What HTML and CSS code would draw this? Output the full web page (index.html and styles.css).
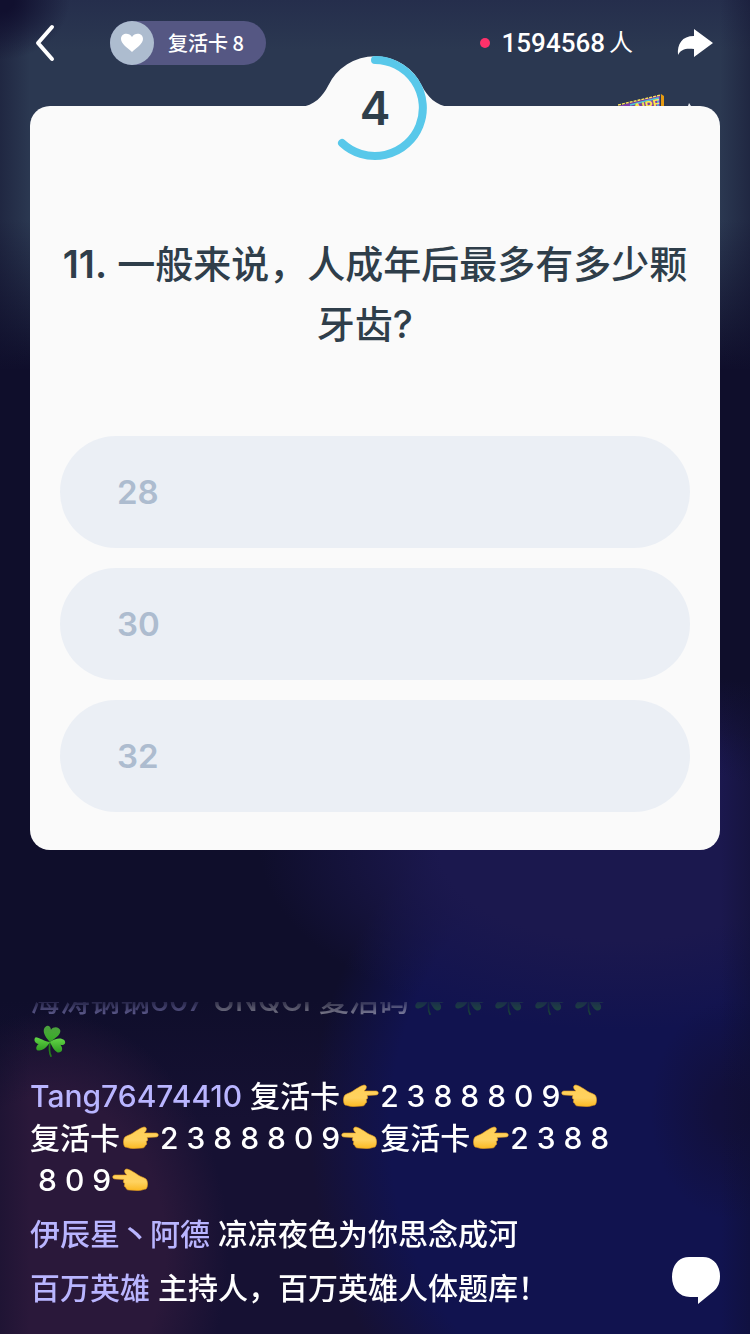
FILE: index.html
```html
<!DOCTYPE html>
<html lang="zh-CN">
<head>
<meta charset="utf-8">
<meta name="viewport" content="width=device-width, initial-scale=1">
<title>百万英雄</title>
<link rel="stylesheet" href="styles.css">
</head>
<body>
<svg class="sprite" aria-hidden="true">
  <defs>
    <linearGradient id="skin" x1="0" y1="0" x2="0" y2="1">
      <stop offset="0" stop-color="#ffd057"/><stop offset="0.6" stop-color="#ffd25f"/><stop offset="1" stop-color="#fbb923"/>
    </linearGradient>
    <linearGradient id="leaf" x1="0" y1="0" x2="0" y2="1">
      <stop offset="0" stop-color="#62d546"/><stop offset="1" stop-color="#2f9c22"/>
    </linearGradient>
    <symbol id="hand" viewBox="0 0 40 28">
      <path fill="url(#skin)" stroke="#e9a01d" stroke-width="0.6" d="M5 13C8 11 10 11 13 9C16 7 20 4 24 3C27 3 27 6 25 8L24 9L36 9C39 9 39 13 36 13L27 13.5C28 15 28 17 26 17.500C27 19 27 21 25 21.500C25 23 24 24 22 24L14 24.500C10 25 7 23 5 23C3 21 3 15 5 13Z"/>
    </symbol>
    <symbol id="clover" viewBox="0 0 40 36">
      <path fill="none" stroke="#237c1b" stroke-width="1.8" stroke-linecap="round" d="M20 18C19 24 19 29 21 33"/>
      <g fill="url(#leaf)">
        <path d="M20 18C15 13 11 6 15 2C18 -1 21 2 21 5C24 1 30 2 31 6C31 11 25 14 20 18Z"/>
        <path d="M20 18C15 18 8 13 5 13C2 15 4 20 8 20C4 23 5 28 9 27C15 26 18 21 20 18Z"/>
        <path d="M20 18C25 14 32 13 35 16C38 20 34 22 31 21C35 26 32 30 28 29C24 27 22 22 20 18Z"/>
      </g>
    </symbol>
  </defs>
</svg>
<main class="screen">
  <header class="topbar">
    <button class="icon-button back" aria-label="返回">
      <svg width="22" height="38" viewBox="0 0 22 38"><path d="M18 3L4 19L18 35" fill="none" stroke="#fff" stroke-width="4" stroke-linecap="round" stroke-linejoin="round"/></svg>
    </button>
    <div class="revive">
      <span class="revive-badge"><svg width="24" height="20" viewBox="0 0 24 20"><path fill="#fff" d="M12 19C8 15 1 11 1 6C1 0 9 -1 12 4C15 -1 23 0 23 6C23 11 16 15 12 19Z"/></svg></span>
      <span>复活卡 8</span>
    </div>
    <div class="viewers"><span class="live-dot"></span><span class="viewer-count">1594568</span><span class="viewer-unit">人</span></div>
    <button class="icon-button share" aria-label="分享">
      <svg width="36" height="28" viewBox="0 0 36 28"><path fill="#fff" d="M17 0L36 14L17 28V20C9 19 4 20 1 26C0 15 5 7 17 7Z"/></svg>
    </button>
  </header>

  <section class="card">
    <svg class="banner" width="80" height="12" viewBox="0 0 80 12" aria-hidden="true">
      <path fill="#7c3ca8" d="M0 12L42 1V12Z"/>
      <path fill="none" stroke="#ffe45b" stroke-width="1.4" stroke-dasharray="3 1" d="M0 11L43 1"/>
      <path fill="none" stroke="#48c8d8" stroke-width="1.6" d="M12 11L40 4V12"/>
      <path fill="#e59a12" d="M43 0L46 2V12H43Z"/>
      <text class="banner-text" x="16" y="19" transform="rotate(-12 16 19)">AIRE</text>
      <path fill="#eef0f5" d="M70 12L71 9L73 12Z"/>
    </svg>
    <div class="timer">
      <svg class="timer-ring" width="150" height="112" viewBox="0 0 150 112" aria-hidden="true">
        <path fill="#fafafa" d="M0 56V51C14 50 23 40 28 30A52 52 0 0 1 122 30C127 40 136 50 150 51V56Z"/>
        <path fill="none" stroke="#58c8ea" stroke-width="8" stroke-linecap="round" d="M75 4A48 48 0 1 1 42 87"/>
      </svg>
      <span class="timer-value">4</span>
    </div>
    <h1 class="question"><span class="question-number">11.</span> 一般来说，人成年后最多有多少颗牙齿?&nbsp;&nbsp;</h1>
    <div class="options">
      <button class="option">28</button>
      <button class="option">30</button>
      <button class="option">32</button>
    </div>
  </section>

  <section class="chat">
    <div class="messages">
      <p class="message"><span class="user">海涛钢钢607</span> UNQCI 复活码<svg class="emoji"><use href="#clover"/></svg><svg class="emoji"><use href="#clover"/></svg><svg class="emoji"><use href="#clover"/></svg><svg class="emoji"><use href="#clover"/></svg><svg class="emoji"><use href="#clover"/></svg><br><svg class="emoji"><use href="#clover"/></svg></p>
      <p class="message"><span class="user">Tang76474410</span> 复活卡<svg class="emoji"><use href="#hand"/></svg>2 3 8 8 8 0 9<svg class="emoji flip"><use href="#hand"/></svg><br>复活卡<svg class="emoji"><use href="#hand"/></svg>2 3 8 8 8 0 9<svg class="emoji flip"><use href="#hand"/></svg>复活卡<svg class="emoji"><use href="#hand"/></svg>2 3 8 8<br>&nbsp;8 0 9<svg class="emoji flip"><use href="#hand"/></svg></p>
      <p class="message"><span class="user">伊辰星丶阿德</span> 凉凉夜色为你思念成河</p>
      <p class="message"><span class="user">百万英雄</span> 主持人，百万英雄人体题库！</p>
    </div>
    <button class="icon-button comment" aria-label="评论">
      <svg width="48" height="48" viewBox="0 0 48 48"><path fill="#fff" d="M17 0H31C41 0 48 8 48 19C48 26 46 30 42 34L26 47V40H18C7 40 0 31 0 20C0 8 7 0 17 0Z"/></svg>
    </button>
  </section>
</main>
</body>
</html>
```
FILE: styles.css
```css
* { box-sizing: border-box; }

body {
  margin: 0;
  background: #0f0e2b;
  color: #fff;
  font-family: Inter, "Noto Sans CJK SC", sans-serif;
}

button { font: inherit; border: 0; cursor: pointer; }

.sprite { position: absolute; width: 0; height: 0; }

.screen {
  display: flex;
  flex-direction: column;
  min-height: 100vh;
  background:
    radial-gradient(ellipse 70px 60px at 0 0, #11102f 20%, transparent),
    linear-gradient(90deg, rgba(15, 14, 43, 0.4), transparent 30px, transparent 720px, rgba(15, 14, 43, 0.4)),
    radial-gradient(ellipse 210px 280px at 50px 1250px, #2a183a 55%, transparent 85%),
    radial-gradient(ellipse 80px 110px at 730px 1110px, #12103c 20%, transparent),
    radial-gradient(ellipse 360px 180px at 620px 850px, #1b184e 50%, transparent),
    radial-gradient(ellipse 400px 420px at 690px 1130px, #11134f 75%, transparent 95%),
    linear-gradient(#252e4c 0, #2b3851 50px, #2b3851 220px, #0f0e2b 370px, #0f0e2b 1000px, #161133 1120px);
}

.topbar {
  display: flex;
  align-items: center;
  height: 106px;
  padding: 0 37px 20px 34px;
}

.icon-button { padding: 0; background: none; line-height: 0; }

.revive {
  display: flex;
  align-items: center;
  gap: 14px;
  height: 44px;
  margin-left: 54px;
  padding-right: 22px;
  border-radius: 22px;
  background: #555783;
  font: 500 20px/44px "Noto Sans CJK SC", sans-serif;
}

.revive-badge {
  display: grid;
  place-items: center;
  width: 44px;
  height: 44px;
  border-radius: 50%;
  background: #adbccf;
}

.viewers {
  display: flex;
  align-items: center;
  margin-left: auto;
  line-height: 44px;
}

.live-dot { width: 10px; height: 10px; margin-right: 12px; border-radius: 50%; background: #ff316a; }
.viewer-count { font: 500 26px/44px Roboto, sans-serif; }
.viewer-unit { margin-left: 4px; font-size: 24px; }
.share { margin-left: 44px; }

.card {
  position: relative;
  margin: 0 30px;
  padding: 128px 30px 38px;
  border-radius: 20px;
  background: #fafafa;
  color: #2f3e4a;
}

.banner { position: absolute; right: 22px; bottom: 100%; }
.banner-text { fill: #ffe74a; font: 700 12px Inter, sans-serif; }

.timer {
  position: absolute;
  top: -50px;
  left: 50%;
  display: grid;
  place-items: center;
  width: 150px;
  height: 104px;
  margin-left: -75px;
}

.timer-ring { position: absolute; top: 0; left: 0; }
.timer-value { position: relative; font-size: 46px; font-weight: 600; line-height: 104px; }

.question {
  margin: 0 0 82px;
  font-size: 38px;
  font-weight: 500;
  line-height: 60px;
  text-align: center;
}

.question-number { font-weight: 600; }

.options { display: grid; gap: 20px; }

.option {
  height: 112px;
  padding: 0 57px;
  border-radius: 56px;
  background: #ebeff5;
  color: #adbccf;
  font-size: 33px;
  font-weight: 600;
  text-align: left;
}

.chat {
  display: flex;
  flex: 1;
  align-items: flex-end;
  justify-content: space-between;
  margin-top: 152px;
  padding: 0 30px;
}

.messages {
  display: flex;
  flex-direction: column;
  justify-content: flex-end;
  gap: 12px;
  height: 332px;
  padding-bottom: 25px;
  overflow: hidden;
  mask-image: linear-gradient(rgba(0, 0, 0, 0.15) 0, #000 36px);
}

.message { margin: 0; font-size: 30px; font-weight: 500; line-height: 42px; white-space: nowrap; }
.user { color: #b9b5ff; }
.emoji { width: 40px; height: 34px; vertical-align: -6px; }
.flip { transform: scaleX(-1); }
.comment { margin-bottom: 29px; }
```
